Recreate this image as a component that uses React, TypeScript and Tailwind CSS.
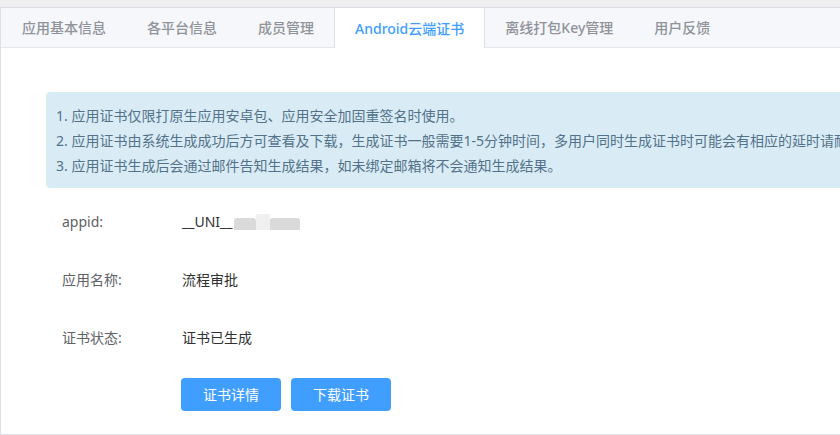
export default function App() {
  const tabs = ["应用基本信息", "各平台信息", "成员管理", "Android云端证书", "离线打包Key管理", "用户反馈"];
  const active = 3;
  const notes = [
    "1. 应用证书仅限打原生应用安卓包、应用安全加固重签名时使用。",
    "2. 应用证书由系统生成成功后方可查看及下载，生成证书一般需要1-5分钟时间，多用户同时生成证书时可能会有相应的延时请耐心等待。",
    "3. 应用证书生成后会通过邮件告知生成结果，如未绑定邮箱将不会通知生成结果。",
  ];

  return (
    <div
      className="w-[840px] h-[435px] overflow-hidden bg-[#efefef] pt-[7px]"
      style={{ fontFamily: '"Noto Sans", "Noto Sans CJK SC", sans-serif' }}
    >
      <div className="w-[860px] h-full bg-white border border-[#dcdfe6] shadow-[0_2px_4px_rgba(0,0,0,0.08)]">
        {/* Tab header */}
        <div className="flex h-[40px] bg-[#f5f7fa] border-b border-[#e4e7ed]">
          {tabs.map((t, i) => (
            <div
              key={t}
              className={
                (i > 0 ? "-ml-px " : "") +
                (i === active
                  ? "h-[40px] px-5 flex items-center text-[14px] font-medium text-[#409eff] bg-white border-x border-[#dcdfe6]"
                  : "h-[39px] px-5 flex items-center text-[14px] font-medium text-[#909399] border-x border-transparent")
              }
            >
              {t}
            </div>
          ))}
        </div>

        {/* Body */}
        <div className="pl-[45px] pt-[44px]">
          <div className="rounded-[4px] bg-[#d9ecf5] pl-[10px] pt-[11px] pb-[10px] text-[14px] leading-[25px] text-[#53728a] whitespace-nowrap overflow-hidden">
            {notes.map((n) => (
              <div key={n}>{n}</div>
            ))}
          </div>

          <div className="mt-[13px] pl-[16px] flex flex-col gap-[18px] text-[14px]">
            <div className="flex items-center h-[40px]">
              <span className="w-[120px] text-[#606266]">appid:</span>
              <span className="flex items-center text-[#303133]">
                __UNI__
                <span className="flex items-end ml-[2px] h-[18px]">
                  <span className="w-[22px] h-[12px] bg-[#dadada] rounded-t-[3px]"></span>
                  <span className="w-[14px] h-[16px] bg-[#f0f0f0]"></span>
                  <span className="w-[30px] h-[12px] bg-[#dadada] rounded-t-[3px]"></span>
                </span>
              </span>
            </div>
            <div className="flex items-center h-[40px]">
              <span className="w-[120px] text-[#606266]">应用名称:</span>
              <span className="text-[#303133]">流程审批</span>
            </div>
            <div className="flex items-center h-[40px]">
              <span className="w-[120px] text-[#606266]">证书状态:</span>
              <span className="text-[#303133]">证书已生成</span>
            </div>
            <div className="flex gap-[10px] pl-[119px] mt-[3px]">
              <button className="w-[100px] h-[33px] rounded-[4px] bg-[#409eff] text-white text-[14px]">证书详情</button>
              <button className="w-[100px] h-[33px] rounded-[4px] bg-[#409eff] text-white text-[14px]">下载证书</button>
            </div>
          </div>
        </div>
      </div>
    </div>
  );
}
